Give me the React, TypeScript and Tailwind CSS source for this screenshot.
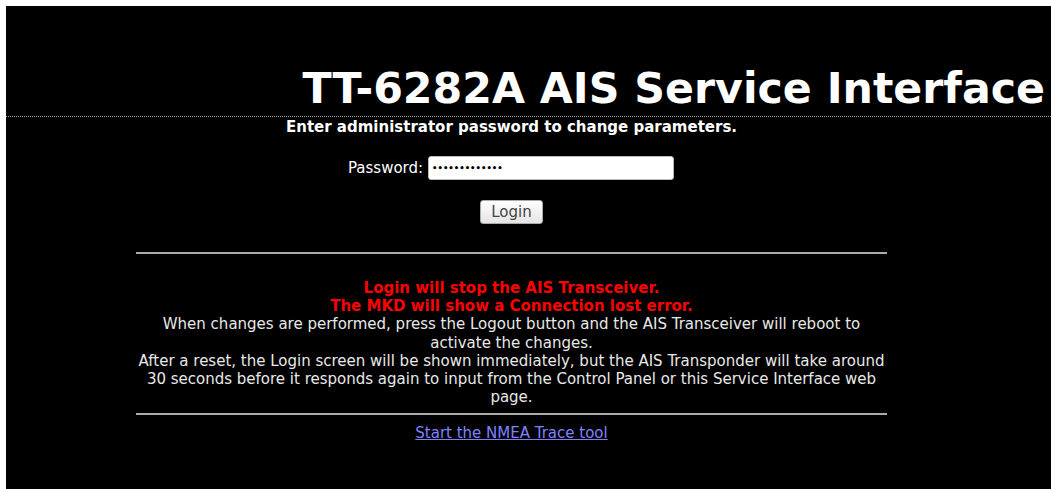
import React from "react";

const sans = { fontFamily: '"DejaVu Sans", sans-serif' };

export default function App() {
  return (
    <div className="w-[1051px] h-[489px] bg-white pt-[6px] pl-[6px] overflow-hidden" style={sans}>
      <div className="h-[483px] bg-black text-white">
        <div className="h-[111px] flex items-end justify-end pr-[6px] border-b border-dotted border-[#9a9a9a]">
          <h1 className="text-[42.7px] leading-[50px] font-bold text-white whitespace-nowrap pb-[3px]">
            TT-6282A AIS Service Interface
          </h1>
        </div>
        <div className="w-[1011px] flex flex-col items-center text-center">
          <p className="text-[15px] leading-[18px] font-bold mt-[1px]">
            Enter administrator password to change parameters.
          </p>
          <div className="mt-[20px] flex items-center gap-[5px] pr-[1px]">
            <label className="text-[15px] text-white">Password:</label>
            <input
              type="password"
              defaultValue="kongsberg1234"
              className="w-[246px] h-[24px] bg-white rounded-[3px] border border-[#bbb] px-[3px] text-black text-[8.5px] font-bold outline-none"
            />
          </div>
          <button className="mt-[20px] h-[24px] px-[10px] rounded-[3px] border border-[#aaa] bg-gradient-to-b from-white to-[#e4e4e4] text-[15px] text-[#444]">
            Login
          </button>
          <div className="w-[751px] mt-[28px] border-t-2 border-[#aaa]" />
          <div className="w-[751px] mt-[25px] text-[15px] leading-[18.2px]">
            <p className="font-bold text-[#ff0000]">Login will stop the AIS Transceiver.</p>
            <p className="font-bold text-[#ff0000]">The MKD will show a Connection lost error.</p>
            <p className="text-[#e8e8e8]">
              When changes are performed, press the Logout button and the AIS Transceiver will reboot to activate the changes.
            </p>
            <p className="text-[#e8e8e8]">
              After a reset, the Login screen will be shown immediately, but the AIS Transponder will take around 30 seconds before it responds again to input from the Control Panel or this Service Interface web page.
            </p>
          </div>
          <div className="w-[751px] mt-[7px] border-t-2 border-[#aaa]" />
          <a href="#" className="mt-[9px] text-[15px] leading-[18px] text-[#8080ff] underline">
            Start the NMEA Trace tool
          </a>
        </div>
      </div>
    </div>
  );
}
